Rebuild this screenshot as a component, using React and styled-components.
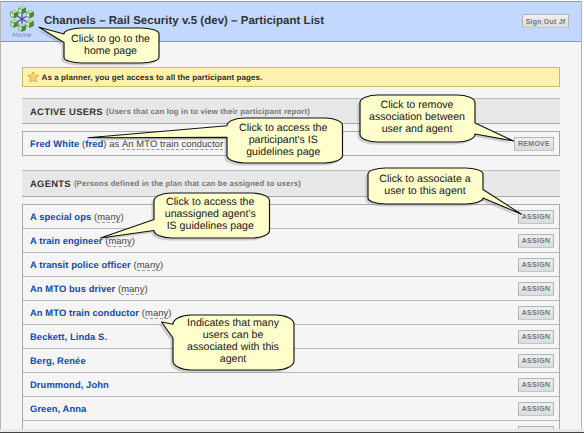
import React from "react";
import styled, { createGlobalStyle } from "styled-components";

const GlobalStyle = createGlobalStyle`
  * { box-sizing: border-box; }
  body {
    margin: 0;
    background: #fff;
    color: #333;
    font-family: "Liberation Sans", Arial, sans-serif;
    text-rendering: geometricPrecision;
    overflow: hidden;
  }
`;

const Screen = styled.div`
  position: relative;
  width: 584px;
  height: 433px;
  padding-top: 1px;
  overflow: hidden;
  background: #fff;
`;

const Page = styled.div`
  width: 582px;
  height: 428px;
  overflow: hidden;
  background: #f5f5f5;
  border-left: 1px solid #b4b4b6;
  border-right: 1px solid #b4b4b6;
`;

const Header = styled.header`
  display: flex;
  align-items: center;
  height: 41px;
  padding: 0 12px 1px 7px;
  background: #c3d8ff;
  border-top: 1px solid #9299a6;
  border-bottom: 1px solid #8f98a8;
`;

const Home = styled.a`
  display: flex;
  flex-direction: column;
  align-items: center;
  width: 28px;
  margin-right: 8px;
  padding-top: 3px;
  color: #6f7b93;
  font-size: 6.5px;
  font-style: italic;
  letter-spacing: 0.5px;
  line-height: 8px;
`;

const Title = styled.h1`
  flex: 1;
  margin: 0;
  color: #333;
  font-size: 11.5px;
  letter-spacing: 0.02px;
  line-height: 14px;
  white-space: nowrap;
`;

const Button = styled.button`
  display: flex;
  align-items: center;
  justify-content: center;
  width: ${(p) => p.$width}px;
  height: 14px;
  margin: 0;
  padding: 1px 0 0;
  border: 1px solid #b2b4b7;
  border-bottom-color: #c1c4c8;
  background: linear-gradient(#efefef, #dadcde);
  color: #777;
  font-family: inherit;
  font-size: 7px;
  font-weight: bold;
  letter-spacing: ${(p) => p.$spacing || 0.3}px;
  line-height: 10px;
  white-space: nowrap;
`;

const Main = styled.main`
  padding: 25px 21px 0;
`;

const Notice = styled.div`
  display: flex;
  align-items: center;
  gap: 3px;
  height: 20px;
  padding-left: 3.5px;
  border: 1px solid #cabb67;
  background: #fdf1ae;
  color: #2f2c20;
  font-size: 8px;
  font-weight: bold;
  letter-spacing: 0.1px;
`;

const SectionTitle = styled.h2`
  display: flex;
  align-items: center;
  gap: 3px;
  height: ${(p) => p.$height}px;
  margin: ${(p) => p.$top}px 0 0;
  padding: 0 0 0 8px;
  border-top: 1px solid #bdbdbd;
  border-bottom: 1px solid #a8a8a8;
  background: #e7e7e7;
  color: #333;
  font-size: 9.4px;
  letter-spacing: 0.3px;
  white-space: nowrap;
`;

const SectionNote = styled.span`
  color: #777;
  font-size: 7.8px;
  letter-spacing: 0.14px;
`;

const List = styled.div`
  margin-top: 7px;
  border: 1px solid #a9a9a9;
`;

const Row = styled.div`
  display: flex;
  align-items: center;
  justify-content: space-between;
  height: ${(p) => (p.$single ? 23 : 24)}px;
  padding: 0 5px 0 7px;
  border-bottom: ${(p) => (p.$single ? 0 : 1)}px solid #b7b7b7;
  color: #444;
  font-size: 9.4px;
  letter-spacing: 0.09px;
  line-height: 11px;
  white-space: nowrap;
`;

const Person = styled.a`
  color: #1049b5;
  font-weight: bold;
`;

const Dotted = styled.span`
  display: inline-block;
  height: 12px;
  border-bottom: 1px dashed #999;
`;

const StatusBar = styled.footer`
  height: 4px;
  background: #e9e8e7;
  border-bottom: 1px solid #444;
`;

const Callout = styled.div`
  position: absolute;
  left: ${(p) => p.$x}px;
  top: ${(p) => p.$y}px;
  width: ${(p) => p.$w}px;
  height: ${(p) => p.$h}px;
`;

const Bubble = styled.svg`
  position: absolute;
  left: 0;
  top: 0;
  overflow: visible;
`;

const CalloutText = styled.div`
  position: relative;
  display: flex;
  flex-direction: column;
  align-items: center;
  padding-top: ${(p) => p.$pad}px;
  padding-right: ${(p) => p.$shift || 0}px;
  color: #161616;
  font-size: 10.6px;
  line-height: 12px;
  white-space: nowrap;
`;

const cubes = [[13, 5], [5.2, 9], [20.8, 9], [5.2, 18.5], [20.8, 18.5], [13, 22.5]];

const Logo = () => (
  <svg width="26" height="27" viewBox="0 0 26 27">
    <path d="M13 5v18M5 9l16 10M21 9L5 19" stroke="#8290c8" strokeWidth=".8" />
    <path d="M13 9.5v9M9 11.5l8 5M17 11.5l-8 5" stroke="#5446b5" strokeWidth="1.2" />
    {cubes.map(([x, y]) => (
      <g key={`${x}-${y}`} transform={`translate(${x} ${y})`}>
        <path d="M-4-2.4L0-4.2 4-2.4V2.3L0 4.3-4 2.3Z" fill="#5f9c4c" />
        <path d="M-4-2.4L0-4.2 4-2.4 0-.6Z" fill="#b5d9a4" />
        <path d="M0-.6L4-2.4V2.3L0 4.3Z" fill="#468a3b" />
        <path d="M-3.4-1.3l2.8 1.2v3.2l-2.8-1.3Z" fill="#d3e9cb" />
      </g>
    ))}
  </svg>
);

const Star = () => (
  <svg width="12" height="12" viewBox="0 0 12 12">
    <path d="M6 .8l1.5 3.4 3.8.4-2.8 2.6.8 3.8L6 9.1 2.7 11l.8-3.8L.7 4.6l3.8-.4Z" fill="#fbd16c" stroke="#e5a13e" strokeWidth=".9" strokeLinejoin="round" />
    <path d="M6 2.8L7 5l1.9.3" fill="none" stroke="#fff0b5" strokeWidth=".8" />
  </svg>
);

const bubblePath = (w, h, side, tip, a, b) => {
  const rx = 18;
  const ry = h / 6;
  const right = side === "right" ? `V${a}L${tip[0]} ${tip[1]}L${w} ${b}V${h - ry}` : `V${h - ry}`;
  const left = side === "left" ? `V${b}L${tip[0]} ${tip[1]}L0 ${a}V${ry}` : `V${ry}`;
  const arc = `A${rx} ${ry} 0 0 1`;
  return `M${rx} 0H${w - rx}${arc} ${w} ${ry}${right}${arc} ${w - rx} ${h}H${rx}${arc} 0 ${h - ry}${left}${arc} ${rx} 0Z`;
};

const callouts = [
  { x: 63.5, y: 28, w: 95, h: 35, side: "left", tip: [-25, -0.7], a: 6, b: 14.5, pad: 5, shift: 1, lines: ["Click to go to the", "home page"] },
  { x: 226.5, y: 117.5, w: 115.5, h: 45, side: "left", tip: [-139, 19.7], a: 7.7, b: 19.3, pad: 4, shift: 2, lines: ["Click to access the", "participant's IS", "guidelines page"] },
  { x: 359.5, y: 94.5, w: 115, h: 47, side: "right", tip: [153.5, 46], a: 28, b: 39, pad: 4.5, lines: ["Click to remove", "association between", "user and agent"] },
  { x: 367.5, y: 167.5, w: 115, h: 36, side: "right", tip: [153.5, 46.3], a: 21.5, b: 30, pad: 5.5, lines: ["Click to associate a", "user to this agent"] },
  { x: 153.5, y: 192.5, w: 115.5, h: 45, side: "left", tip: [-53.5, 45], a: 26.5, b: 37.5, pad: 3.5, shift: 2, lines: ["Click to access the", "unassigned agent's", "IS guidelines page"] },
  { x: 172.5, y: 314.5, w: 121, h: 55, side: "left", tip: [-11.5, 7], a: 9.2, b: 23, pad: 2.5, lines: ["Indicates that many", "users can be", "associated with this", "agent"] },
];

const agents = [
  ["A special ops", true],
  ["A train engineer", true],
  ["A transit police officer", true],
  ["An MTO bus driver", true],
  ["An MTO train conductor", true],
  ["Beckett, Linda S."],
  ["Berg, Renée"],
  ["Drummond, John"],
  ["Green, Anna"],
  [""],
];

export default function App() {
  return (
    <Screen>
      <GlobalStyle />
      <Page>
        <Header>
          <Home>
            <Logo />
            Home
          </Home>
          <Title>Channels – Rail Security v.5 (dev) – Participant List</Title>
          <Button $width={47} $spacing={0.2}>Sign Out Jf</Button>
        </Header>
        <Main>
          <Notice>
            <Star />
            As a planner, you get access to all the participant pages.
          </Notice>
          <SectionTitle $height={26} $top={11}>
            ACTIVE USERS
            <SectionNote>(Users that can log in to view their participant report)</SectionNote>
          </SectionTitle>
          <List>
            <Row $single>
              <span>
                <Person>Fred White</Person> (<Person>fred</Person>) as <Dotted>An MTO train conductor</Dotted>
              </span>
              <Button $width={40}>REMOVE</Button>
            </Row>
          </List>
          <SectionTitle $height={27} $top={14}>
            AGENTS
            <SectionNote>(Persons defined in the plan that can be assigned to users)</SectionNote>
          </SectionTitle>
          <List>
            {agents.map(([name, many]) => (
              <Row key={name}>
                <span>
                  <Person>{name}</Person>
                  {many && <> (<Dotted>many</Dotted>)</>}
                </span>
                <Button $width={36}>{name && "ASSIGN"}</Button>
              </Row>
            ))}
          </List>
        </Main>
      </Page>
      <StatusBar />
      {callouts.map((c) => {
        const d = bubblePath(c.w, c.h, c.side, c.tip, c.a, c.b);
        return (
          <Callout key={c.lines.join(" ")} $x={c.x} $y={c.y} $w={c.w} $h={c.h}>
            <Bubble width={c.w} height={c.h}>
              <path d={d} transform="translate(-2.5 2.5)" fill="#888" fillOpacity=".35" />
              <path d={d} fill="#ffffcc" stroke="#111" strokeWidth="1.15" strokeLinejoin="round" />
            </Bubble>
            <CalloutText $pad={c.pad} $shift={c.shift}>
              {c.lines.map((line) => <span key={line}>{line}</span>)}
            </CalloutText>
          </Callout>
        );
      })}
    </Screen>
  );
}
